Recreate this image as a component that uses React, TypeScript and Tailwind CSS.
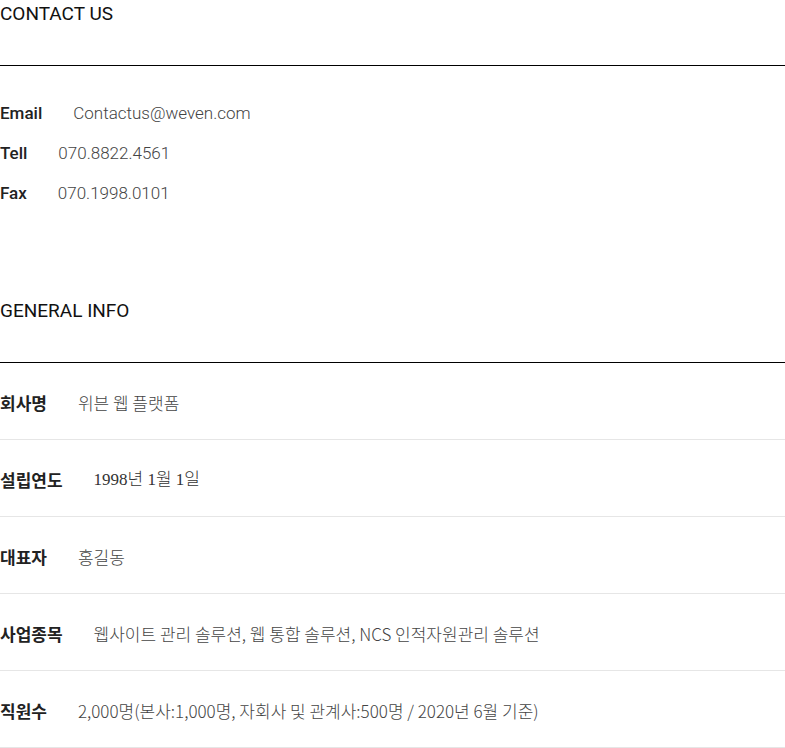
const contacts = [
  { label: "Email", value: "Contactus@weven.com" },
  { label: "Tell", value: "070.8822.4561" },
  { label: "Fax", value: "070.1998.0101" },
];

const info = [
  { label: "회사명", value: "위븐 웹 플랫폼" },
  { label: "설립연도", value: "1998년 1월 1일", serif: true },
  { label: "대표자", value: "홍길동" },
  { label: "사업종목", value: "웹사이트 관리 솔루션, 웹 통합 솔루션, NCS 인적자원관리 솔루션" },
  { label: "직원수", value: "2,000명(본사:1,000명, 자회사 및 관계사:500명 / 2020년 6월 기준)" },
];

function SectionTitle({ children }: { children: string }) {
  return (
    <h2 className="border-b border-black pb-[37px] text-[19px] leading-7 font-normal text-[#111] [font-family:Roboto,'Noto_Sans_CJK_KR',sans-serif]">
      {children}
    </h2>
  );
}

export default function App() {
  return (
    <div className="w-[785px] bg-white text-[#111] [font-family:Roboto,'Noto_Sans_CJK_KR',sans-serif]">
      <section>
        <SectionTitle>CONTACT US</SectionTitle>
        <ul className="pt-[28px]">
          {contacts.map((c) => (
            <li className="flex h-10 items-center text-[17px]" key={c.label}>
              <span className="font-medium text-[#222]">{c.label}</span>
              <span className="ml-[31px] font-light text-[#444]">{c.value}</span>
            </li>
          ))}
        </ul>
      </section>

      <section className="mt-[83px]">
        <SectionTitle>GENERAL INFO</SectionTitle>
        <ul>
          {info.map((row) => (
            <li
              className="flex h-[77px] items-center border-b border-[#e6e6e6] pt-[4px] text-[17px]"
              key={row.label}
            >
              <span className="font-bold text-[#222] [font-family:'Noto_Sans_CJK_KR',sans-serif]">
                {row.label}
              </span>
              <span
                className={
                  row.serif
                    ? "ml-[31px] font-light text-[#333] [font-family:'Liberation_Serif','Noto_Sans_CJK_KR',serif]"
                    : "ml-[31px] font-light text-[#444] [font-family:'Noto_Sans_CJK_KR',sans-serif]"
                }
              >
                {row.value}
              </span>
            </li>
          ))}
        </ul>
      </section>
    </div>
  );
}
